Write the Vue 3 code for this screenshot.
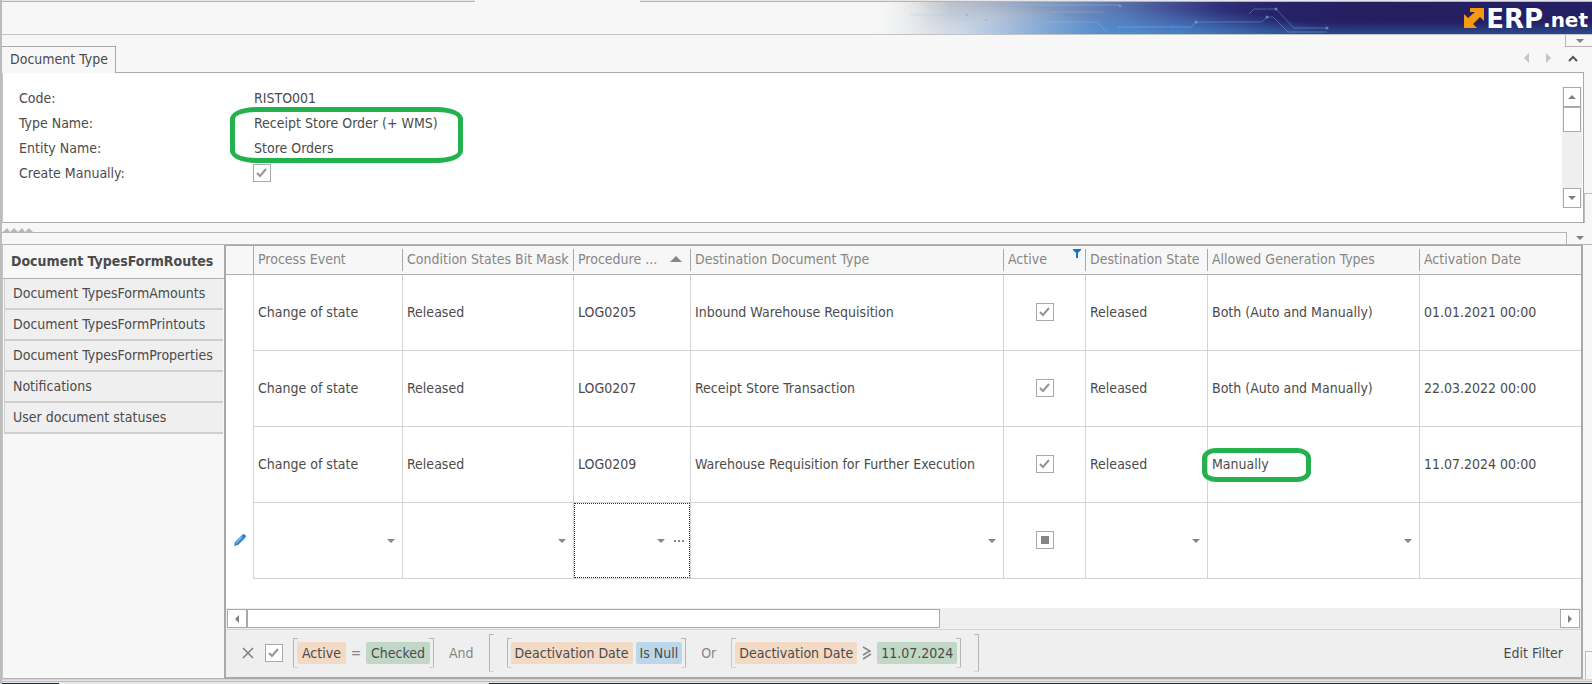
<script setup>
import { ref } from 'vue'

const fields = [
  { id: 'code', label: 'Code:', value: 'RISTO001' },
  { id: 'type', label: 'Type Name:', value: 'Receipt Store Order (+ WMS)', marked: true },
  { id: 'entity', label: 'Entity Name:', value: 'Store Orders' }
]

const tabs = [
  'Document TypesFormRoutes',
  'Document TypesFormAmounts',
  'Document TypesFormPrintouts',
  'Document TypesFormProperties',
  'Notifications',
  'User document statuses'
]
const activeTab = ref(0)

const rows = [
  { event: 'Change of state', mask: 'Released', proc: 'LOG0205', dest: 'Inbound Warehouse Requisition', state: 'Released', gen: 'Both (Auto and Manually)', date: '01.01.2021 00:00' },
  { event: 'Change of state', mask: 'Released', proc: 'LOG0207', dest: 'Receipt Store Transaction', state: 'Released', gen: 'Both (Auto and Manually)', date: '22.03.2022 00:00' },
  { event: 'Change of state', mask: 'Released', proc: 'LOG0209', dest: 'Warehouse Requisition for Further Execution', state: 'Released', gen: 'Manually', date: '11.07.2024 00:00', marked: true }
]
</script>

<template>
  <div class="window">
    <div class="window-tabs"><span class="wt a"></span><span class="wt-active"></span><span class="wt b"></span></div>

    <header class="banner">
      <div class="art">
        <svg class="circuit" viewBox="0 0 722 32" width="722" height="32" aria-hidden="true">
          <g fill="none" stroke="#9cc8ee" stroke-width="1" opacity=".35">
            <path d="M40 13H97M85 18H116M120 23H140M134 3H250M182 10H233M177 20H227L238 31M248 25H321L326 20M326 20H392L397 15H403L418 30H457" />
            <path d="M379 12L384 7H406L424 26H457" />
          </g>
          <g fill="#7fb6e6" opacity=".6">
            <circle cx="97" cy="13" r="1.3" /><circle cx="116" cy="18" r="1.3" /><circle cx="250" cy="4" r="1.3" />
            <circle cx="177" cy="20" r="1.3" /><circle cx="326" cy="20" r="1.5" /><circle cx="397" cy="15" r="1.5" />
            <circle cx="406" cy="7" r="1.5" /><circle cx="457" cy="26" r="1.5" />
          </g>
        </svg>
        <div class="logo">
          <svg viewBox="0 0 20 20" width="20" height="20" aria-hidden="true">
            <path fill="#f7990f" d="M6 0H20V13L16 9L9 16L13 20H0V6L4 10L11 4H6Z" />
          </svg>
          <span class="erp">ERP</span><span class="net">.net</span>
        </div>
      </div>
    </header>

    <section class="doc">
      <div class="doc-head">
        <button class="doc-tab">Document Type</button>
        <div class="doc-tools">
          <button class="corner" aria-label="Options"><svg viewBox="0 0 8 4" width="8" height="4"><path d="M0 0H8L4 4Z" fill="#808080" /></svg></button>
          <div class="nav">
            <button aria-label="Previous"><svg viewBox="0 0 5 10" width="5" height="10"><path d="M5 0V10L0 5Z" fill="#c4c4c4" /></svg></button>
            <button aria-label="Next"><svg viewBox="0 0 5 10" width="5" height="10"><path d="M0 0V10L5 5Z" fill="#c4c4c4" /></svg></button>
            <button aria-label="Collapse"><svg viewBox="0 0 10 7" width="10" height="7"><path d="M1 6L5 2L9 6" fill="none" stroke="#555" stroke-width="2" /></svg></button>
          </div>
        </div>
      </div>
      <div class="doc-row">
        <div class="doc-body">
          <dl class="fields">
            <template v-for="f in fields" :key="f.id">
              <dt>{{ f.label }}</dt>
              <dd><span v-if="f.marked" class="mark mark-names"></span>{{ f.value }}</dd>
            </template>
            <dt><label for="manual">Create Manually:</label></dt>
            <dd>
              <span class="check"><input id="manual" type="checkbox" checked /><svg viewBox="0 0 18 18"><path d="M4 9L7 12L13 5" /></svg></span>
            </dd>
          </dl>
          <div class="vscroll">
            <button aria-label="Scroll up"><svg viewBox="0 0 8 4" width="8" height="4"><path d="M0 4H8L4 0Z" fill="#808080" /></svg></button>
            <div class="vthumb"></div>
            <button class="down" aria-label="Scroll down"><svg viewBox="0 0 8 4" width="8" height="4"><path d="M0 0H8L4 4Z" fill="#808080" /></svg></button>
          </div>
        </div>
        <div class="edge"></div>
      </div>
    </section>

    <div class="splitter">
      <svg viewBox="0 0 30 4" width="30" height="4" aria-hidden="true"><path d="M0 4L4 0L7 4L11 0L15 4L19 0L22 4L26 0L30 4Z" fill="#b8b8b8" /></svg>
    </div>
    <div class="strip">
      <div class="strip-box"></div>
      <button aria-label="Options"><svg viewBox="0 0 8 4" width="8" height="4"><path d="M0 0H8L4 4Z" fill="#808080" /></svg></button>
    </div>

    <main class="detail">
      <nav class="side">
        <button v-for="(t, i) in tabs" :key="t" :class="{ active: i === activeTab }" @click="activeTab = i">{{ t }}</button>
      </nav>

      <section class="grid">
        <table>
          <colgroup>
            <col class="c0" /><col class="c1" /><col class="c2" /><col class="c3" /><col class="c4" />
            <col class="c5" /><col class="c6" /><col class="c7" /><col />
          </colgroup>
          <thead>
            <tr>
              <th class="ind"></th>
              <th>Process Event</th>
              <th>Condition States Bit Mask</th>
              <th><div class="head">Procedure ... <svg viewBox="0 0 12 6" width="12" height="6"><path d="M0 6L6 0L12 6Z" fill="#868686" /></svg></div></th>
              <th>Destination Document Type</th>
              <th><div class="head">Active <svg class="funnel" viewBox="0 0 8 9" width="8" height="9"><path d="M0 0H8V1L5 4V9H3V4L0 1Z" fill="#1277c9" /></svg></div></th>
              <th>Destination State</th>
              <th>Allowed Generation Types</th>
              <th>Activation Date</th>
            </tr>
          </thead>
          <tbody>
            <tr v-for="r in rows" :key="r.proc">
              <td class="ind"></td>
              <td>{{ r.event }}</td>
              <td>{{ r.mask }}</td>
              <td>{{ r.proc }}</td>
              <td>{{ r.dest }}</td>
              <td class="mid">
                <span class="check"><input type="checkbox" checked :aria-label="'Active ' + r.proc" /><svg viewBox="0 0 18 18"><path d="M4 9L7 12L13 5" /></svg></span>
              </td>
              <td>{{ r.state }}</td>
              <td><span class="cell"><span v-if="r.marked" class="mark mark-gen"></span>{{ r.gen }}</span></td>
              <td>{{ r.date }}</td>
            </tr>
            <tr class="edit">
              <td class="ind">
                <svg viewBox="0 0 12 12" width="12" height="12"><path d="M0 12L1 8L8 1Q10 -1 11 1Q13 2 11 4L4 11Z" fill="#2f86d2" /><path d="M2 9L8 3" stroke="#8cc0ec" stroke-width="1.2" /></svg>
              </td>
              <td><div class="pick"><select aria-label="Process Event"></select><svg viewBox="0 0 8 4"><path d="M0 0H8L4 4Z" /></svg></div></td>
              <td><div class="pick"><select aria-label="Condition States Bit Mask"></select><svg viewBox="0 0 8 4"><path d="M0 0H8L4 4Z" /></svg></div></td>
              <td><div class="pick focus"><select aria-label="Procedure"></select><svg viewBox="0 0 8 4"><path d="M0 0H8L4 4Z" /></svg><button aria-label="Browse"><svg viewBox="0 0 11 2"><path d="M0 0H2V2H0ZM4 0H6V2H4ZM8 0H10V2H8Z" /></svg></button></div></td>
              <td><div class="pick"><select aria-label="Destination Document Type"></select><svg viewBox="0 0 8 4"><path d="M0 0H8L4 4Z" /></svg></div></td>
              <td class="mid">
                <span class="check part"><input type="checkbox" aria-label="Active" /><svg viewBox="0 0 18 18"><path d="M5 5H13V13H5Z" /></svg></span>
              </td>
              <td><div class="pick"><select aria-label="Destination State"></select><svg viewBox="0 0 8 4"><path d="M0 0H8L4 4Z" /></svg></div></td>
              <td><div class="pick"><select aria-label="Allowed Generation Types"></select><svg viewBox="0 0 8 4"><path d="M0 0H8L4 4Z" /></svg></div></td>
              <td></td>
            </tr>
          </tbody>
        </table>

        <div class="hscroll">
          <button aria-label="Scroll left"><svg viewBox="0 0 4 8" width="4" height="8"><path d="M4 0V8L0 4Z" fill="#808080" /></svg></button>
          <div class="hthumb"></div>
          <button class="right" aria-label="Scroll right"><svg viewBox="0 0 4 8" width="4" height="8"><path d="M0 0V8L4 4Z" fill="#808080" /></svg></button>
        </div>

        <footer class="filter">
          <button class="clear" aria-label="Clear filter"><svg viewBox="0 0 12 12" width="12" height="12"><path d="M1 1L11 11M11 1L1 11" stroke="#808080" stroke-width="1.5" /></svg></button>
          <span class="check"><input type="checkbox" checked aria-label="Filter enabled" /><svg viewBox="0 0 18 18"><path d="M4 9L7 12L13 5" /></svg></span>
          <span class="group first"><button class="chip field">Active</button><span class="op">=</span><button class="chip val">Checked</button></span>
          <span class="join">And</span>
          <span class="outer">
            <span class="group"><button class="chip field">Deactivation Date</button><button class="chip fn">Is Null</button></span>
            <span class="join">Or</span>
            <span class="group"><button class="chip field">Deactivation Date</button><svg class="ge" viewBox="0 0 10 14" width="10" height="14"><path d="M1 1L8 5L1 9M1 13L9 8" fill="none" stroke="#868686" stroke-width="1.5" /></svg><button class="chip val">11.07.2024</button></span>
          </span>
          <button class="edit-filter">Edit Filter</button>
        </footer>
      </section>
      <div class="edge low"></div>
    </main>
    <div class="base"><span class="l"></span><span class="d"></span></div>
  </div>
</template>

<style>
body { background: #f7f7f7; }
</style>

<style scoped>
.window {
  display: flex;
  flex-direction: column;
  min-height: 100vh;
  box-sizing: border-box;
  border-left: 2px solid #bcbcbc;
  background: #f7f7f7;
  color: #4b4b4b;
  font: 14px/20px "DejaVu Sans Condensed", "DejaVu Sans", sans-serif;
}
.window *, .window *::before { box-sizing: border-box; }
button { padding: 0; border: 0; background: none; color: inherit; font: inherit; display: flex; align-items: center; }
svg { flex: none; }

.window-tabs { display: flex; height: 2px; }
.wt { background: #e6e6e6; border-bottom: 1px solid #b5b5b5; }
.wt.a { flex: 0 0 473px; }
.wt-active { flex: 0 0 165px; }
.wt.b { flex: 1; }

.banner { display: flex; justify-content: flex-end; height: 33px; border-bottom: 1px solid #c4c4c4; }
.art {
  flex: 0 0 722px;
  display: flex;
  justify-content: flex-end;
  position: relative;
  overflow: hidden;
  background:
    linear-gradient(90deg, #f7f7f7 0, #f7f7f700 80px),
    radial-gradient(ellipse 190px 28px at 270px 34px, #4a98e0cc, #4a98e000),
    radial-gradient(ellipse 150px 36px at 90px 36px, #dbe8f8cc, #dbe8f800),
    linear-gradient(0deg, #2f6db088 0, #2f6db000 12px) 300px 0 no-repeat,
    linear-gradient(90deg, #f7f7f7 0, #c6c8cc 60px, #a8b3c8 120px, #7c94bd 190px, #5873ae 250px, #434f94 300px, #2f3179 350px, #25236a 400px, #261f62 480px, #241f64 100%);
}
.circuit { position: absolute; left: 0; top: 0; }
.logo { display: flex; align-items: center; padding-right: 4px; height: 32px; color: #fff; font-family: "DejaVu Sans", sans-serif; font-weight: 700; position: relative; }
.logo svg { margin-right: 2px; }
.erp { font-size: 26px; line-height: 32px; padding-top: 2px; }
.net { font-size: 20px; line-height: 32px; padding-top: 4px; }

.doc-head { display: flex; justify-content: space-between; align-items: flex-end; height: 38px; }
.doc-tab { height: 27px; padding: 0 7px 2px 8px; border: 1px solid #a9a9a9; border-bottom: 0; border-left: 0; }
.doc-tools { flex: 1; display: flex; flex-direction: column; align-items: flex-end; height: 38px; border-bottom: 1px solid #a9a9a9; margin-right: 8px; }
.corner { width: 27px; height: 12px; flex: none; margin-right: -8px; border: 1px solid #b5b5b5; border-top: 0; border-right: 0; padding-left: 10px; }
.nav { display: flex; align-items: center; gap: 17px; padding: 6px 6px 0 0; }
.doc-row { display: flex; }
.doc-body { flex: 1; display: flex; justify-content: space-between; min-height: 150px; padding: 0 1px 0 16px; background: #fff; border: 1px solid #a9a9a9; border-top: 0; border-left-color: #c4c4c4; }
.edge { flex: 0 0 8px; margin-top: 120px; border: 1px solid #bdbdbd; border-right: 0; border-bottom: 0; }
.fields { display: grid; grid-template-columns: 235px 1fr; grid-auto-rows: 25px; align-items: center; margin: 12px 0 0; }
.fields dt, .fields dd { margin: 0; position: relative; }
.vscroll { display: flex; flex-direction: column; width: 20px; margin: 14px 0; background: #efefef; padding: 0 1px; }
.vscroll button, .hscroll button { justify-content: center; width: 18px; height: 20px; background: #fff; border: 1px solid #a9a9a9; }
.vthumb { height: 25px; background: #fff; border: 1px solid #a9a9a9; }
.vscroll .down { margin-top: auto; }

.mark { position: absolute; border: 5px solid #22b14c; pointer-events: none; }
.mark-names { left: -24px; top: -6px; width: 233px; height: 56px; border-radius: 26px / 12px; }
.mark-gen { left: -10px; top: -8px; width: 109px; height: 34px; border-radius: 14px / 10px; }

.check { display: inline-grid; width: 18px; height: 18px; vertical-align: middle; flex: none; }
.check input { grid-area: 1 / 1; appearance: none; width: 18px; height: 18px; margin: 0; background: #fff; border: 1px solid #a9a9a9; }
.check svg { grid-area: 1 / 1; width: 18px; height: 18px; pointer-events: none; fill: none; stroke: #969696; stroke-width: 2; position: relative; }
.check.part svg { fill: #868686; stroke: none; }
.fields .check { display: grid; margin-left: -1px; }

.splitter { display: flex; align-items: flex-end; height: 9px; padding-left: 1px; }
.strip { display: flex; height: 12px; }
.strip-box { flex: 1; border: 1px solid #b5b5b5; border-left: 0; border-bottom: 0; }
.strip button { width: 25px; justify-content: center; }

.detail { flex: 1; display: flex; border-top: 1px solid #b5b5b5; }
.side { flex: 0 0 222px; display: flex; flex-direction: column; border-left: 1px solid #c4c4c4; border-bottom: 1px solid #b5b5b5; padding-right: 1px; }
.side button { height: 31px; margin-left: 1px; padding: 0 0 1px 8px; background: #efefef; border: solid #cfcfcf; border-width: 0 0 2px 1px; }
.side button.active { height: 34px; margin: 0 -1px 0 0; background: #f7f7f7; border: 0; border-bottom: 1px solid #b0b0b0; font-weight: 700; }
.grid { flex: 1; min-width: 0; display: flex; flex-direction: column; background: #fff; border: solid #a9a9a9; border-width: 1px 2px 2px 2px; }
.edge.low { flex-basis: 7px; margin: 406px 0 0 2px; }

table { width: 100%; table-layout: fixed; border-collapse: separate; border-spacing: 0; }
.c0 { width: 28px; } .c1 { width: 149px; } .c2 { width: 171px; } .c3 { width: 117px; } .c4 { width: 313px; }
.c5 { width: 82px; } .c6 { width: 122px; } .c7 { width: 212px; }
th { height: 29px; padding: 0 0 2px 4px; text-align: left; font-weight: 400; color: #868686; background: linear-gradient(#a9a9a9, #a9a9a9) right 3px / 1px 22px no-repeat #f7f7f7; border-bottom: 1px solid #b0b0b0; white-space: nowrap; }
th.ind { background: #f7f7f7; border-right: 1px solid #a9a9a9; }
th:last-child { background: #f7f7f7; }
td { height: 76px; padding: 0 0 2px 4px; border: solid #d3d3d3; border-width: 0 1px 1px 0; white-space: nowrap; }
td:last-child { border-right: 0; }
td.ind { border-bottom: 0; }
td.mid, .edit td.mid { padding: 0 0 3px; text-align: center; }
.head { display: flex; align-items: center; justify-content: space-between; padding-right: 9px; }
.funnel { align-self: flex-start; margin-right: -4px; }
.cell { position: relative; }
.edit td { padding: 0; }
.edit td.ind { padding-left: 8px; }
.pick { display: flex; align-items: center; height: 75px; padding-right: 7px; }
.pick svg { width: 8px; height: 4px; fill: #868686; }
.pick select { flex: 1; min-width: 0; height: 73px; appearance: none; border: 0; background: transparent; font: inherit; }
.pick.focus { border: 1px dotted #333; padding-right: 4px; }
.pick button { margin-left: 9px; }
.pick button svg { width: 11px; height: 2px; }

.hscroll { display: flex; align-items: center; margin-top: auto; height: 21px; padding: 0 1px; background: #efefef; }
.hthumb { flex: 0 1 693px; height: 19px; background: #fff; border: 1px solid #a9a9a9; }
.hscroll button { width: 20px; height: 19px; }
.hscroll .right { margin-left: auto; }

.filter { display: flex; align-items: center; height: 48px; padding: 0 18px 2px 16px; background: #efefef; border-top: 1px solid #d3d3d3; }
.clear { margin-right: 11px; }
.group { display: flex; align-items: center; height: 30px; padding: 0 4px; position: relative; }
.group.first { margin-left: 10px; }
.group.first .chip { padding: 0 5px; }
.group::before, .outer::before { content: ""; position: absolute; inset: 0; border: 1px solid #b5b5b5; clip-path: polygon(0 0, 5px 0, 5px 100%, 0 100%, 0 0, 100% 0, 100% 100%, calc(100% - 5px) 100%, calc(100% - 5px) 0, 100% 0, 0 0); pointer-events: none; }
.outer { display: flex; align-items: center; height: 38px; padding: 0 18px; position: relative; }
.chip { height: 22px; padding: 0 4px; border-radius: 2px; }
.field { background: #f3dac4; }
.val { background: #c1d8c6; }
.fn { background: #bcd7e9; margin-left: 3px; }
.op { width: 20px; text-align: center; color: #868686; }
.ge { margin: 0 5px; }
.join { padding: 0 15px; color: #868686; }
.edit-filter { margin-left: auto; }
.base { display: flex; height: 5px; border-top: 1px solid #d3d3d3; align-items: flex-end; background: linear-gradient(#e4e4e4 0 1px, #bdbdbd 1px 2px, #e8e8e8 2px); }
.base .l { flex: 0 0 57px; height: 1px; background: #1d2b2f; }
.base .d { flex: 1; height: 1px; margin-left: 430px; background: #1d2830; }
</style>
